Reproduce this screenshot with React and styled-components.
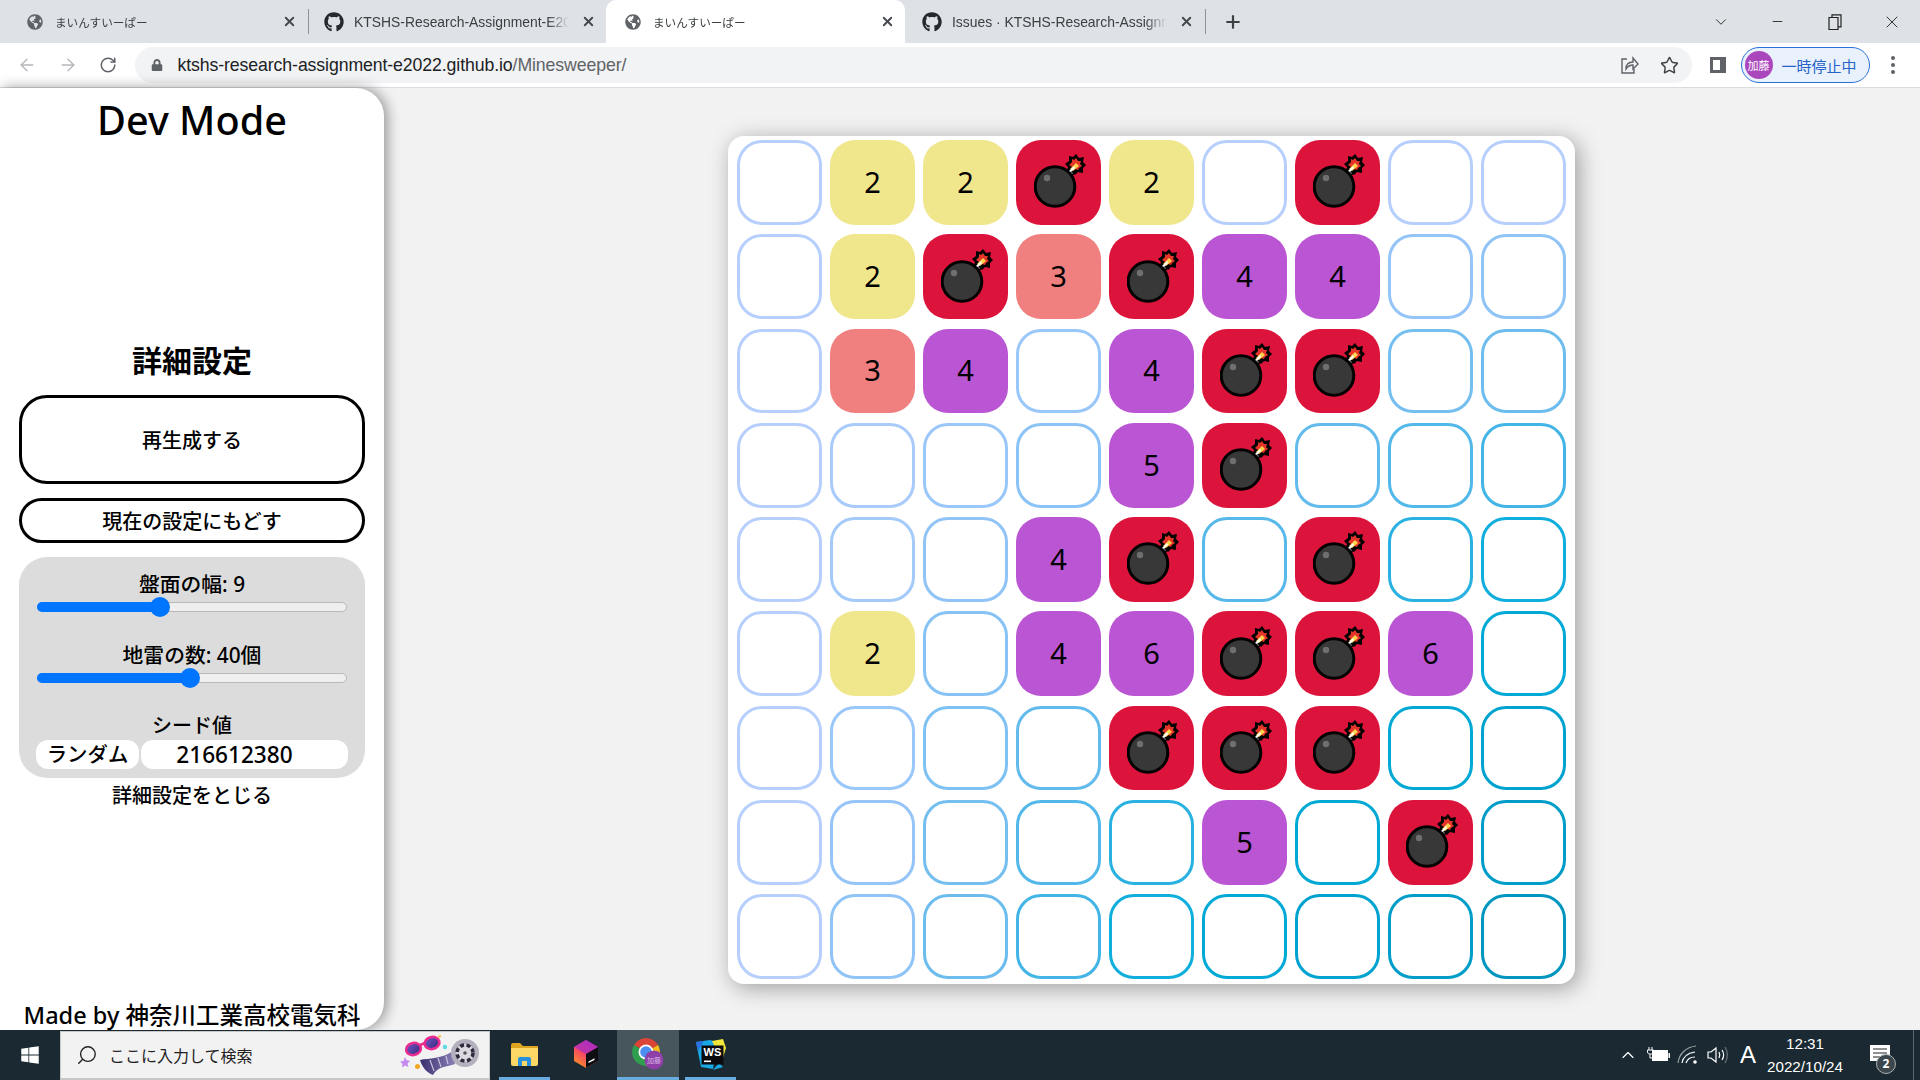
import React from "react";
import styled, { createGlobalStyle } from "styled-components";
import { FaGithub, FaGlobeAmericas, FaLock, FaWindows } from "react-icons/fa";
import { ArrowLeft, ArrowRight, RotateCw, Star, X, Plus, ChevronDown, ChevronUp, Minus, Search } from "lucide-react";

const JP = `"Noto Sans", "Noto Sans CJK JP", sans-serif`;
const UI = `"Liberation Sans", "Noto Sans CJK JP", sans-serif`;

const GlobalStyle = createGlobalStyle`
  html, body { margin: 0; padding: 0; height: 100%; overflow: hidden; }
  * { box-sizing: border-box; }
  #root { height: 1080px; }
`;

const Screen = styled.div`
  width: 1920px;
  height: 1080px;
  display: flex;
  flex-direction: column;
  font-family: ${JP};
  color: #000;
`;

// browser chrome
const TabBar = styled.div`
  height: 43px;
  background: #dee1e6;
  display: flex;
  padding-left: 8px;
  flex-shrink: 0;
`;

const Tab = styled.div`
  width: 299px;
  height: 43px;
  padding: 0 10px 0 19px;
  display: flex;
  align-items: center;
  gap: 12px;
  position: relative;
  background: ${(p) => (p.$active ? "#fff" : "transparent")};
  border-radius: ${(p) => (p.$active ? "10px 10px 0 0" : "0")};
  color: #45484c;
  svg { flex-shrink: 0; }
  &::after {
    content: "";
    display: ${(p) => (p.$sep ? "block" : "none")};
    position: absolute;
    right: -2px;
    top: 9px;
    height: 25px;
    width: 1px;
    background: #8e9196;
  }
`;

const TabTitle = styled.span`
  flex: 1;
  padding-top: 1px;
  font-family: ${UI};
  font-size: ${(p) => (p.$small ? "11.6px" : "13.9px")};
  white-space: nowrap;
  overflow: hidden;
  color: #3c4043;
  -webkit-mask-image: linear-gradient(90deg, #000 90%, transparent);
  mask-image: linear-gradient(90deg, #000 90%, transparent);
`;

const NewTab = styled.div`
  margin-left: 17px;
  width: 24px;
  display: flex;
  align-items: center;
  justify-content: center;
  color: #3c4043;
`;

const WindowControls = styled.div`
  margin-left: auto;
  display: flex;
  align-items: center;
  color: #222;
`;

const WindowButton = styled.div`
  width: 57px;
  height: 38px;
  display: flex;
  align-items: center;
  justify-content: center;
`;

const Toolbar = styled.div`
  height: 45px;
  background: #fff;
  border-bottom: 1px solid #dadce0;
  display: flex;
  align-items: center;
  padding-left: 7px;
  flex-shrink: 0;
`;

const NavButton = styled.div`
  width: ${(p) => (p.$panel ? "36px" : "40.5px")};
  margin-left: ${(p) => (p.$panel ? "8px" : "0")};
  display: flex;
  justify-content: center;
  color: ${(p) => (p.$dim ? "#b4b7ba" : "#5f6368")};
`;

const Omnibox = styled.div`
  margin-left: 6px;
  width: 1557px;
  height: 36px;
  border-radius: 18px;
  background: #f1f3f4;
  display: flex;
  align-items: center;
  padding-left: 16px;
  color: #5f6368;
`;

const Url = styled.span`
  margin-left: 15px;
  font-family: ${UI};
  font-size: 17.7px;
  letter-spacing: -0.1px;
  color: #202124;
  em { font-style: normal; color: #5f6368; }
`;

const OmniIcons = styled.div`
  margin-left: auto;
  padding-right: 13px;
  display: flex;
  align-items: center;
  gap: 21px;
  color: #5f6368;
`;

const Profile = styled.div`
  margin-left: 5px;
  width: 129px;
  height: 36px;
  border: 1.5px solid #2a72d8;
  border-radius: 18px;
  background: #e9f1fc;
  display: flex;
  align-items: center;
  padding-left: 3px;
  gap: 9px;
  font-family: ${UI};
  font-size: 15px;
  color: #2563c9;
`;

const Avatar = styled.div`
  width: 28px;
  height: 28px;
  border-radius: 50%;
  background: #ab47bc;
  color: #fff;
  font-size: 11px;
  display: flex;
  align-items: center;
  justify-content: center;
  white-space: nowrap;
`;

const Dots = styled.div`
  margin-left: 21px;
  display: flex;
  flex-direction: column;
  gap: 3px;
  i { width: 4px; height: 4px; border-radius: 50%; background: #5f6368; display: block; }
`;

// page
const Main = styled.main`
  flex: 1;
  min-height: 0;
  display: flex;
  background: #f2f2f2;
`;

const Sidebar = styled.aside`
  width: 384px;
  height: 100%;
  background: #fff;
  border-radius: 0 28px 28px 0;
  box-shadow: 3px 0 14px rgba(0, 0, 0, 0.4);
  padding: 0 19px;
  display: flex;
  flex-direction: column;
  align-items: center;
  flex-shrink: 0;
`;

const Title = styled.h1`
  margin: 5px 0 0;
  font-size: 39.6px;
  line-height: 54px;
  font-weight: 500;
`;

const Heading = styled.h2`
  margin: 194px 0 0;
  font-size: 30px;
  line-height: 40px;
  font-weight: 700;
`;

const OutlineButton = styled.button`
  width: 100%;
  height: ${(p) => (p.$tall ? "89px" : "45px")};
  margin-top: 14px;
  border: 3.5px solid #000;
  border-radius: ${(p) => (p.$tall ? "28px" : "23px")};
  background: #fff;
  font-family: ${JP};
  font-size: 20px;
  font-weight: 500;
  padding: 0;
  color: #000;
`;

const SettingsPanel = styled.section`
  width: 100%;
  height: 221px;
  margin-top: 14px;
  padding: 13px 18px 0;
  background: #dcdcdc;
  border-radius: 28px;
  display: flex;
  flex-direction: column;
  align-items: center;
`;

const FieldLabel = styled.label`
  font-size: ${(p) => (p.$seed ? "20px" : "20.8px")};
  line-height: 28px;
  font-weight: 500;
`;

const Track = styled.div`
  position: relative;
  width: 100%;
  height: 10px;
  margin: 4px 0 29px;
  background: #efefef;
  border: 1px solid #b9b9b9;
  border-radius: 5px;
`;

const TrackFill = styled.div`
  position: absolute;
  left: -1px;
  top: -1px;
  bottom: -1px;
  background: #0075ff;
  border-radius: 5px 0 0 5px;
`;

const Thumb = styled.div`
  position: absolute;
  top: 50%;
  width: 20px;
  height: 20px;
  margin: -10px 0 0 -10px;
  border-radius: 50%;
  background: #0075ff;
`;

const SeedRow = styled.div`
  display: flex;
  gap: 2px;
  margin: 0 -1px;
`;

const SeedPill = styled.div`
  height: 29px;
  width: ${(p) => (p.$wide ? "207px" : "103px")};
  flex-shrink: 0;
  background: #fff;
  border-radius: 12px;
  font-size: ${(p) => (p.$wide ? "22.6px" : "20.4px")};
  line-height: 29px;
  text-align: center;
  font-weight: 500;
  padding-right: ${(p) => (p.$wide ? "20px" : "0")};
`;

const CloseLink = styled.div`
  margin-top: 4px;
  font-size: 20px;
  line-height: 28px;
  font-weight: 500;
`;

const Footer = styled.div`
  margin-top: auto;
  font-size: 23.5px;
  line-height: 30px;
  font-weight: 500;
  white-space: nowrap;
`;

const Stage = styled.div`
  flex: 1;
  display: flex;
  justify-content: center;
  padding: 48px 1px 0 0;
`;

const Board = styled.div`
  width: 847px;
  height: 848px;
  padding: 4px 9px 5px;
  background: #fff;
  border-radius: 16px;
  box-shadow: 4px 4px 22px rgba(0, 0, 0, 0.35);
  display: grid;
  grid-template-columns: repeat(9, 1fr);
  grid-template-rows: repeat(9, 1fr);
  column-gap: 8px;
  row-gap: 9.5px;
`;

const Cell = styled.div`
  border-radius: 25px;
  background: ${(p) => p.$fill || "#fff"};
  border: ${(p) => (p.$fill ? "none" : `3px solid ${p.$line}`)};
  display: flex;
  align-items: center;
  justify-content: center;
  font-size: 29px;
  padding-bottom: 2px;
  svg { margin-left: 3px; }
`;

// taskbar
const Taskbar = styled.footer`
  height: 50px;
  flex-shrink: 0;
  background: #1b2a32;
  display: flex;
  align-items: stretch;
  color: #fff;
`;

const StartButton = styled.div`
  width: 60px;
  display: flex;
  align-items: center;
  justify-content: center;
`;

const SearchBox = styled.div`
  width: 430px;
  margin-top: 1px;
  background: #f2f2f2;
  border: 1px solid #c8c8c8;
  border-bottom-width: 2px;
  display: flex;
  align-items: center;
  padding-left: 15px;
  gap: 11px;
  color: #222;
  font-size: 16px;
  font-family: "Noto Sans CJK JP", sans-serif;
`;

const SearchArt = styled.div`
  margin-left: auto;
  margin-right: 9px;
  display: flex;
`;

const TaskApps = styled.div`
  margin-left: 3px;
  display: flex;
`;

const TaskApp = styled.div`
  width: 62px;
  display: flex;
  align-items: center;
  justify-content: center;
  padding-bottom: 2px;
  position: relative;
  background: ${(p) => (p.$active ? "#47555c" : "transparent")};
  &::after {
    content: "";
    display: ${(p) => (p.$open ? "block" : "none")};
    position: absolute;
    bottom: 0;
    height: 3px;
    left: ${(p) => (p.$active ? "0" : "6px")};
    right: ${(p) => (p.$active ? "0" : "5px")};
    background: #6aacdf;
  }
`;

const Tray = styled.div`
  margin-left: auto;
  display: flex;
  align-items: center;
  padding-right: 6px;
`;

const TrayIcon = styled.div`
  width: 30px;
  display: flex;
  align-items: center;
  justify-content: center;
`;

const ImeLetter = styled.div`
  width: 30px;
  margin-right: 1px;
  text-align: center;
  font-family: ${UI};
  font-size: 24px;
`;

const Clock = styled.div`
  width: 82px;
  text-align: center;
  font-family: ${UI};
  font-size: 15.2px;
  line-height: 23px;
  white-space: nowrap;
`;

const Notify = styled.div`
  width: 68px;
  display: flex;
  justify-content: center;
  border-right: 1px solid #5c666c;
  align-self: stretch;
  align-items: center;
  padding-bottom: 3px;
  position: relative;
`;

const NotifyBadge = styled.div`
  position: absolute;
  left: 30px;
  top: 24px;
  width: 20px;
  height: 20px;
  border-radius: 50%;
  background: #3b474d;
  border: 1px solid #aab0b3;
  font-size: 12px;
  font-weight: 700;
  line-height: 18px;
  text-align: center;
  color: #fff;
`;

const BOARD = [
  "_22B2_B__",
  "_2B3B44__",
  "_34_4BB__",
  "____5B___",
  "___4B_B__",
  "_2_46BB6_",
  "____BBB__",
  "_____5_B_",
  "_________",
];

const FILL = { 2: "#f0e68c", 3: "#f08080", 4: "#ba55d3", 5: "#ba55d3", 6: "#ba55d3", B: "#dc143c" };

// outline colour follows row * column, read off the reference at steps of 1/8
const LINE_STOPS = [
  [183, 207, 253],
  [144, 196, 247],
  [108, 189, 238],
  [66, 181, 230],
  [16, 174, 220],
  [0, 169, 214],
  [0, 163, 207],
  [0, 157, 200],
  [0, 150, 191],
];

const lineColor = (r, c) => {
  const t = (r * c) / 8;
  const i = Math.min(Math.floor(t), 7);
  const f = t - i;
  const v = LINE_STOPS[i].map((a, k) => Math.round(a + (LINE_STOPS[i + 1][k] - a) * f));
  return `rgb(${v.join(",")})`;
};

const Bomb = () => (
  <svg width="52" height="54" viewBox="0 0 52 54">
    <path d="M30 20 l6 -7 5 5 -6 7z" fill="#6d6d6d" stroke="#000" strokeWidth="1.5" />
    <circle cx="21" cy="32.5" r="19.8" fill="#383838" stroke="#000" strokeWidth="3" />
    <circle cx="13" cy="24" r="3.2" fill="#6f6f6f" />
    <polygon
      points="42,0 45,4 50,3 49,8 52,11 49,14 49,19 44,18 41,21 38,18 33,18 34,13 31,10 35,7 35,2 39,3"
      fill="#000"
    />
    <polygon points="42,4 44,7 47,7 46,10 48,12 45,14 44,16 41,15 38,16 38,13 35,11 38,8 38,5 40,6" fill="#e5352b" />
    <path d="M36 15 l6 -6 3 3 -6 5z" fill="#fbd34d" />
    <path d="M35 17 l5 -5 1 2 -4 4z" fill="#fff" />
  </svg>
);

const Slider = ({ value }) => (
  <Track>
    <TrackFill style={{ width: `${value}%` }} />
    <Thumb style={{ left: `${value}%` }} />
  </Track>
);

const ShareIcon = () => (
  <svg width="20" height="20" viewBox="0 0 20 20" fill="none" stroke="currentColor" strokeWidth="1.4">
    <path d="M8 4H3v14h12v-4" />
    <path d="M7 14c0-5 3-7 7-7V3l5 6-5 5v-4c-3 0-5 1-7 4z" />
  </svg>
);

const PanelIcon = () => (
  <svg width="18" height="18" viewBox="0 0 18 18">
    <path d="M1 1h16v16H1z" fill="#5f6368" />
    <path d="M4 4h7v10H4z" fill="#fff" />
  </svg>
);

const SearchArtIcon = () => (
  <svg width="80" height="44" viewBox="0 0 80 44">
    <defs>
      <linearGradient id="lens" x1="0" y1="0" x2="1" y2="1">
        <stop offset="0" stopColor="#7b55c9" />
        <stop offset="1" stopColor="#2f2a78" />
      </linearGradient>
      <linearGradient id="film" x1="0" y1="0" x2="1" y2="0">
        <stop offset="0" stopColor="#3a2f6e" />
        <stop offset="1" stopColor="#8a7fb5" />
      </linearGradient>
    </defs>
    <ellipse cx="13.5" cy="16" rx="7.5" ry="6" fill="url(#lens)" stroke="#ea2b8f" strokeWidth="2.5" transform="rotate(-15 13.5 16)" />
    <ellipse cx="32" cy="10" rx="7.5" ry="6" fill="url(#lens)" stroke="#ea2b8f" strokeWidth="2.5" transform="rotate(-15 32 10)" />
    <path d="M20 12l5-2" stroke="#ea2b8f" strokeWidth="2.5" />
    <path d="M38 4l3-1" stroke="#f6c14b" strokeWidth="2" />
    <path d="M20 27c9-2 22-1 33-9l2 13c-8 3-17 2-22 11-6-2-11-8-13-15z" fill="url(#film)" />
    <path d="M30 27l4 11M38 25l3 9M46 23l2 8" stroke="#c9c2e0" strokeWidth="1.2" />
    <circle cx="65" cy="20" r="14" fill="#b4b0bd" />
    <circle cx="65" cy="20" r="9" fill="#dcdae0" />
    <circle cx="65" cy="20" r="8" fill="none" stroke="#2f2a3c" strokeWidth="3.5" strokeDasharray="4 2.5" />
    <circle cx="65" cy="20" r="1.8" fill="#555" />
    <circle cx="45" cy="14" r="2.2" fill="#5ed8e8" />
    <path d="M5 24l1.5 3 3.5 1-2.5 2.5 1 3.5-3.5-1.5-3 2 .5-3.5-2.5-2.5 3.5-.5z" fill="#c48af0" />
    <circle cx="17.5" cy="33.5" r="2.5" fill="#f5a623" />
  </svg>
);

const FolderIcon = () => (
  <svg width="27" height="23" viewBox="0 0 27 23">
    <path d="M0 2a2 2 0 0 1 2-2h7l3 3h15v6H0z" fill="#dda51f" />
    <path d="M0 5h27v16a2 2 0 0 1-2 2H2a2 2 0 0 1-2-2z" fill="#fbd766" />
    <path d="M7 23v-7a2 2 0 0 1 2-2h9a2 2 0 0 1 2 2v7h-4v-5h-5v5z" fill="#2a8fdc" />
  </svg>
);

const ToolboxIcon = () => (
  <svg width="24" height="28" viewBox="0 0 24 28">
    <defs>
      <linearGradient id="tb" x1="0" y1="1" x2="0.6" y2="0">
        <stop offset="0" stopColor="#f9a11b" />
        <stop offset="0.6" stopColor="#f6406a" />
        <stop offset="1" stopColor="#d02bb0" />
      </linearGradient>
    </defs>
    <path d="M12 0l12 7v14l-12 7-12-7V7z" fill="url(#tb)" />
    <path d="M12 0l12 7-12 7-12-7z" fill="#a42fc4" opacity="0.7" />
    <path d="M12 14l12-7v14l-12 7z" fill="#0d0d12" />
    <path d="M14.5 21.5l6-3.2v1.6l-6 3.2z" fill="#fff" />
  </svg>
);

const BadgeText = styled.text`
  font-family: "Noto Sans CJK JP", sans-serif;
  font-size: 7px;
  fill: #d9b7e6;
`;

const ChromeIcon = () => (
  <svg width="32" height="32" viewBox="0 0 32 32">
    <path d="M14 14L1.9 7A14 14 0 0 1 26.1 7z" fill="#dc4437" />
    <path d="M14 14L14 28A14 14 0 0 1 1.9 7z" fill="#2f9e4e" />
    <path d="M14 14L26.1 7A14 14 0 0 1 14 28z" fill="#f7bc1c" />
    <circle cx="14" cy="14" r="7.5" fill="#fff" />
    <circle cx="14" cy="14" r="5.8" fill="#4d8ff0" />
    <circle cx="22" cy="22" r="9.5" fill="#8e3fa8" />
    <BadgeText x="15" y="24.5">加藤</BadgeText>
  </svg>
);

const WsText = styled.text`
  font-family: "Liberation Sans", sans-serif;
  font-weight: 700;
  font-size: 11px;
  fill: #fff;
`;

const WsIcon = () => (
  <svg width="31" height="31" viewBox="0 0 31 31">
    <path d="M1 3l14-2 7 2-4 27-12-2z" fill="#18a9e6" />
    <path d="M3 12L1 3l8-1z" fill="#2b6fe0" />
    <path d="M17 2l11-2 3 9-4 13z" fill="#f2e53c" />
    <path d="M24 24l4 4-10 3z" fill="#18a9e6" />
    <path d="M6.5 6.5h22v19h-22z" fill="#0b0b0f" />
    <path d="M9 21.5h7v1.6H9z" fill="#fff" />
    <WsText x="8.5" y="17">WS</WsText>
  </svg>
);

const Wifi = () => (
  <svg width="22" height="20" viewBox="0 0 22 20" fill="none" stroke="#fff" strokeWidth="1.2">
    <path d="M1 18C2 9 9 2 19 1" opacity="0.55" />
    <path d="M5 18c1-6 6-10 13-11" />
    <path d="M9 18c1-3 4-6 9-6" />
    <circle cx="18" cy="17" r="1.8" fill="#fff" stroke="none" />
  </svg>
);

const Battery = () => (
  <svg width="24" height="16" viewBox="0 0 24 16">
    <path d="M6 3h16v11H6z" fill="#fff" />
    <path d="M22.5 6H24v5h-1.5z" fill="#fff" />
    <path d="M3 0v3M6 0v3" stroke="#fff" strokeWidth="1" />
    <path d="M1.5 3h6v2c0 2-2 2-3 2s-3 0-3-2zM4 7v4h3" fill="none" stroke="#fff" strokeWidth="1" />
  </svg>
);

const Speaker = () => (
  <svg width="22" height="18" viewBox="0 0 22 18" fill="none" stroke="#fff" strokeWidth="1.2">
    <path d="M1 6h3l5-4v14l-5-4H1z" />
    <path d="M12 6c1 2 1 4 0 6M15 4c2 3 2 7 0 10" />
    <path d="M18 1c3 5 3 11 0 16" opacity="0.35" />
  </svg>
);

const NotifyIcon = () => (
  <svg width="20" height="18" viewBox="0 0 20 18">
    <path d="M0 0h20v16H0z" fill="#fff" />
    <path d="M3 4h14M3 8h14M3 12h9" stroke="#222" strokeWidth="1.2" />
  </svg>
);

const TABS = [
  { globe: true, title: "まいんすいーぱー", sep: true },
  { title: "KTSHS-Research-Assignment-E2022" },
  { globe: true, title: "まいんすいーぱー", active: true },
  { title: "Issues · KTSHS-Research-Assignment-E2022", sep: true },
];

export default function App() {
  return (
    <Screen>
      <GlobalStyle />
      <TabBar>
        {TABS.map((t, i) => (
          <Tab key={i} $active={t.active} $sep={t.sep}>
            {t.globe ? <FaGlobeAmericas size={16} color="#5f6368" /> : <FaGithub size={20} color="#24292f" style={{ margin: "0 -2px" }} />}
            <TabTitle $small={t.globe}>{t.title}</TabTitle>
            <X size={15} strokeWidth={3} color="#45484c" />
          </Tab>
        ))}
        <NewTab>
          <Plus size={20} strokeWidth={2.6} />
        </NewTab>
        <WindowControls>
          <WindowButton><ChevronDown size={18} strokeWidth={1.2} /></WindowButton>
          <WindowButton><Minus size={15} strokeWidth={1.4} /></WindowButton>
          <WindowButton>
            <svg width="14" height="16" viewBox="0 0 14 16" fill="none" stroke="#222" strokeWidth="1.2">
              <path d="M1 3.5h9v12H1zM4 3.5V.8h9v12h-3" />
            </svg>
          </WindowButton>
          <WindowButton><X size={20} strokeWidth={1.1} /></WindowButton>
        </WindowControls>
      </TabBar>
      <Toolbar>
        <NavButton $dim><ArrowLeft size={20} strokeWidth={1.6} /></NavButton>
        <NavButton $dim><ArrowRight size={20} strokeWidth={1.6} /></NavButton>
        <NavButton><RotateCw size={18} strokeWidth={2} /></NavButton>
        <Omnibox>
          <FaLock size={12} />
          <Url>ktshs-research-assignment-e2022.github.io<em>/Minesweeper/</em></Url>
          <OmniIcons>
            <ShareIcon />
            <Star size={19} strokeWidth={1.8} color="#3c4043" />
          </OmniIcons>
        </Omnibox>
        <NavButton $panel><PanelIcon /></NavButton>
        <Profile>
          <Avatar>加藤</Avatar>
          一時停止中
        </Profile>
        <Dots><i /><i /><i /></Dots>
      </Toolbar>
      <Main>
        <Sidebar>
          <Title>Dev Mode</Title>
          <Heading>詳細設定</Heading>
          <OutlineButton $tall>再生成する</OutlineButton>
          <OutlineButton>現在の設定にもどす</OutlineButton>
          <SettingsPanel>
            <FieldLabel>盤面の幅: 9</FieldLabel>
            <Slider value={39.7} />
            <FieldLabel>地雷の数: 40個</FieldLabel>
            <Slider value={49.4} />
            <FieldLabel $seed>シード値</FieldLabel>
            <SeedRow>
              <SeedPill>ランダム</SeedPill>
              <SeedPill $wide>216612380</SeedPill>
            </SeedRow>
          </SettingsPanel>
          <CloseLink>詳細設定をとじる</CloseLink>
          <Footer>Made by 神奈川工業高校電気科</Footer>
        </Sidebar>
        <Stage>
          <Board>
            {BOARD.map((row, r) =>
              row.split("").map((v, c) => (
                <Cell key={`${r}-${c}`} $fill={FILL[v]} $line={lineColor(r, c)}>
                  {v === "B" ? <Bomb /> : v === "_" ? null : v}
                </Cell>
              ))
            )}
          </Board>
        </Stage>
      </Main>
      <Taskbar>
        <StartButton><FaWindows size={20} /></StartButton>
        <SearchBox>
          <Search size={22} strokeWidth={1.5} style={{ transform: "scaleX(-1)" }} />
          ここに入力して検索
          <SearchArt><SearchArtIcon /></SearchArt>
        </SearchBox>
        <TaskApps>
          <TaskApp $open><FolderIcon /></TaskApp>
          <TaskApp><ToolboxIcon /></TaskApp>
          <TaskApp $active $open><ChromeIcon /></TaskApp>
          <TaskApp $open><WsIcon /></TaskApp>
        </TaskApps>
        <Tray>
          <TrayIcon><ChevronUp size={20} strokeWidth={1.4} /></TrayIcon>
          <TrayIcon><Battery /></TrayIcon>
          <TrayIcon><Wifi /></TrayIcon>
          <TrayIcon><Speaker /></TrayIcon>
          <ImeLetter>A</ImeLetter>
          <Clock>12:31<br />2022/10/24</Clock>
          <Notify>
            <NotifyIcon />
            <NotifyBadge>2</NotifyBadge>
          </Notify>
        </Tray>
      </Taskbar>
    </Screen>
  );
}
